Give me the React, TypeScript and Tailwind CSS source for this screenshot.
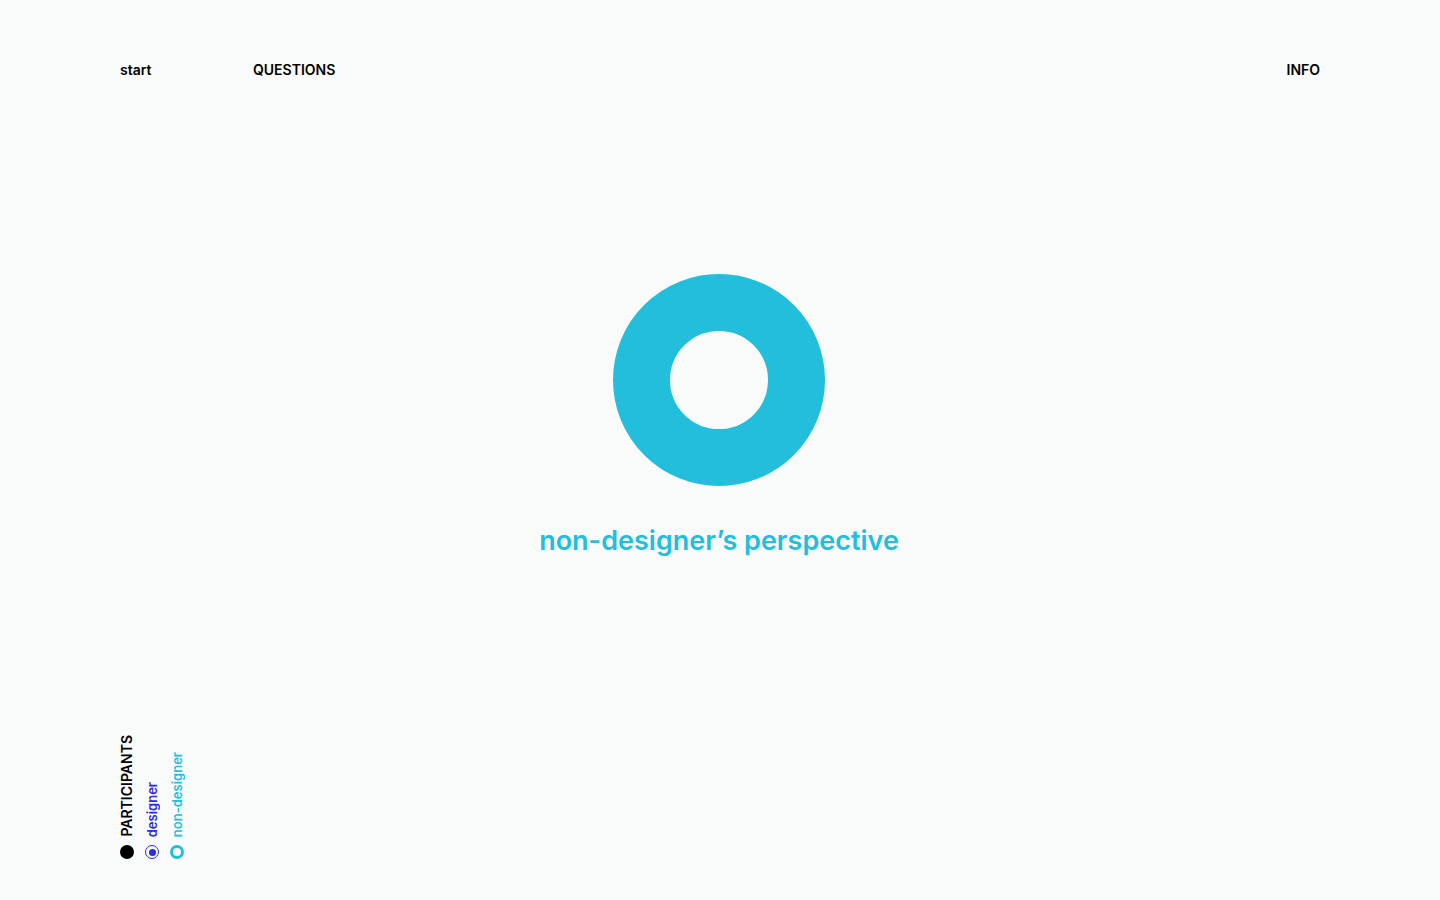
import React from 'react';

const legend = [
  { label: 'PARTICIPANTS', text: 'text-black', dot: 'solid' },
  { label: 'designer', text: 'text-[#2b2be0]', dot: 'designer' },
  { label: 'non-designer', text: 'text-[#22bedb]', dot: 'non' },
];

const Dot = ({ kind }: { kind: string }) => {
  if (kind === 'solid') return <span className="block w-[14px] h-[14px] rounded-full bg-black" />;
  if (kind === 'designer')
    return (
      <span className="flex w-[14px] h-[14px] rounded-full border-[1.5px] border-[#2b2be0] items-center justify-center">
        <span className="block w-[7px] h-[7px] rounded-full bg-[#2b2be0]" />
      </span>
    );
  return <span className="block w-[14px] h-[14px] rounded-full border-[3.5px] border-[#22bedb]" />;
};

export default function App() {
  return (
    <div
      className="w-full h-[900px] bg-[#f9fafa] flex flex-col px-[120px]"
      style={{ fontFamily: 'Inter, "Open Sans", sans-serif' }}
    >
      {/* top nav */}
      <header className="flex items-center pt-[60px] text-[14px] font-semibold text-black leading-[20px]">
        <a className="w-[133px]">start</a>
        <a>QUESTIONS</a>
        <a className="ml-auto">INFO</a>
      </header>

      {/* perspective */}
      <main className="flex-1 flex flex-col items-center pt-[194px] pr-[2px]">
        <div className="w-[212px] h-[212px] rounded-full border-[57px] border-[#22bedb]" />
        <h1 className="mt-[38px] text-[27px] leading-[33px] font-semibold text-[#22bedb]">
          non-designer’s perspective
        </h1>
      </main>

      {/* legend */}
      <footer className="flex items-end gap-[11px] pb-[41px]">
        {legend.map((l) => (
          <div key={l.label} className="flex flex-col items-center gap-[8px] w-[14px]">
            <span
              className={`[writing-mode:vertical-rl] rotate-180 font-semibold leading-[14px] ${l.text} ${
                l.dot === 'solid' ? 'text-[14px]' : 'text-[13px]'
              }`}
            >
              {l.label}
            </span>
            <Dot kind={l.dot} />
          </div>
        ))}
      </footer>
    </div>
  );
}
